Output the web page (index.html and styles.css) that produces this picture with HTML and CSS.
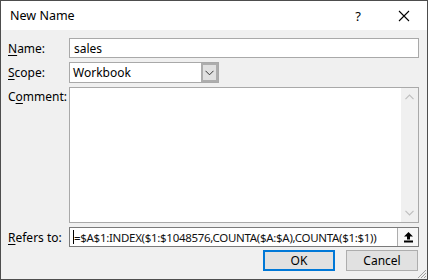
FILE: index.html
```html
<!DOCTYPE html>
<html>
<head>
<meta charset="utf-8">
<link rel="stylesheet" href="styles.css">
</head>
<body>
<div class="dialog">
  <div class="titlebar">
    <span class="title">New Name</span>
    <span class="help">?</span>
    <svg class="close" width="12" height="12" viewBox="0 0 12 12"><path d="M1 1 L11 11 M11 1 L1 11" stroke="#000" stroke-width="1.1" fill="none"/></svg>
  </div>
  <div class="content">
    <div class="form">
      <label class="lbl"><u>N</u>ame:</label>
      <div class="field text">sales</div>

      <label class="lbl"><u>S</u>cope:</label>
      <div class="combo">
        <span class="combo-text">Workbook</span>
        <span class="combo-btn"><svg width="9" height="6" viewBox="0 0 9 6"><path d="M0.5 0.8 L4.5 4.8 L8.5 0.8" stroke="#333" stroke-width="1" fill="none"/></svg></span>
      </div>

      <label class="lbl lbl-top">C<u>o</u>mment:</label>
      <div class="field memo">
        <div class="memo-area"></div>
        <div class="scrollbar">
          <svg width="9" height="6" viewBox="0 0 9 6"><path d="M0.5 5.2 L4.5 1.2 L8.5 5.2" stroke="#bfbfbf" stroke-width="1.2" fill="none"/></svg>
          <svg width="9" height="6" viewBox="0 0 9 6"><path d="M0.5 0.8 L4.5 4.8 L8.5 0.8" stroke="#bfbfbf" stroke-width="1.2" fill="none"/></svg>
        </div>
      </div>

      <label class="lbl"><u>R</u>efers to:</label>
      <div class="field refers">
        <span class="formula"><span class="caret"></span>=$A$1:INDEX($1:$1048576,COUNTA($A:$A),COUNTA($1:$1))</span>
        <span class="collapse-btn"><svg width="11" height="12" viewBox="0 0 11 12"><path d="M5.5 1 L10 5.5 L7 5.5 L7 8.5 L4 8.5 L4 5.5 L1 5.5 Z" fill="#000"/><rect x="1" y="9.5" width="9" height="2" fill="#000"/></svg></span>
      </div>
    </div>
    <div class="buttons">
      <div class="btn btn-default">OK</div>
      <div class="btn">Cancel</div>
    </div>
    <svg class="grip" width="11" height="11" viewBox="0 0 11 11">
      <path d="M10 2 L2 10 M10 5 L5 10 M10 8 L8 10" stroke="#a0a0a0" stroke-width="1" fill="none"/>
    </svg>
  </div>
</div>
</body>
</html>
```
FILE: styles.css
```css
* { box-sizing: border-box; }
html, body { margin: 0; padding: 0; }
body {
  width: 428px;
  height: 280px;
  font-family: "Noto Sans", "Open Sans", sans-serif;
  font-size: 12px;
  color: #000;
  background: #f0f0f0;
}
.dialog {
  width: 428px;
  height: 280px;
  border: 1px solid #4d4d4d;
  display: flex;
  flex-direction: column;
  background: #f0f0f0;
}
.titlebar {
  height: 29px;
  background: #fff;
  display: flex;
  align-items: center;
  padding-left: 9px;
  flex-shrink: 0;
}
.title { font-size: 12.5px; flex: 1; }
.help { font-size: 13px; margin-right: 37px; }
.close { margin-right: 17px; }
.content {
  flex: 1;
  position: relative;
  padding: 8px 8px 0 7px;
}
.form {
  display: grid;
  grid-template-columns: 61px 350px;
  grid-template-rows: 20px 21px 136px 20px;
  row-gap: 4px;
}
.lbl { display: flex; align-items: center; white-space: nowrap; }
.lbl-top { align-items: flex-start; padding-top: 1px; }
.lbl u { text-decoration-thickness: 1px; text-underline-offset: 2px; }
.field {
  background: #fff;
  border: 1px solid #a9a9a9;
}
.text { display: flex; align-items: center; padding-left: 4px; }
.combo {
  width: 150px;
  background: #fff;
  border: 1px solid #a9a9a9;
  display: flex;
  align-items: center;
}
.combo-text { flex: 1; padding-left: 3px; }
.combo-btn {
  width: 17px;
  height: 100%;
  background: #e1e1e1;
  border: 2px solid #adadad;
  display: flex;
  align-items: center;
  justify-content: center;
}
.memo { display: flex; }
.memo-area { flex: 1; }
.scrollbar {
  width: 17px;
  background: #f0f0f0;
  display: flex;
  flex-direction: column;
  justify-content: space-between;
  align-items: center;
  padding: 6px 0 6px;
}
.refers {
  border-color: #7a7a7a;
  display: flex;
  align-items: center;
  padding-left: 3px;
}
.formula {
  flex: 1;
  white-space: nowrap;
  font-size: 11.5px;
  letter-spacing: -0.3px;
  display: flex;
  align-items: center;
  color: #111;
}
.caret {
  width: 1px;
  height: 14px;
  background: #000;
}
.collapse-btn {
  width: 21px;
  height: 100%;
  border-left: 1px solid #adadad;
  background: #f7f7f7;
  display: flex;
  align-items: center;
  justify-content: center;
}
.buttons {
  display: flex;
  justify-content: flex-end;
  gap: 11px;
  margin-top: 3px;
  margin-right: 1px;
}
.btn {
  width: 72px;
  height: 21px;
  background: #e1e1e1;
  border: 1px solid #adadad;
  display: flex;
  align-items: center;
  justify-content: center;
}
.btn-default { border: 2px solid #0078d7; }
.grip { position: absolute; right: 0; bottom: 0; }
```
